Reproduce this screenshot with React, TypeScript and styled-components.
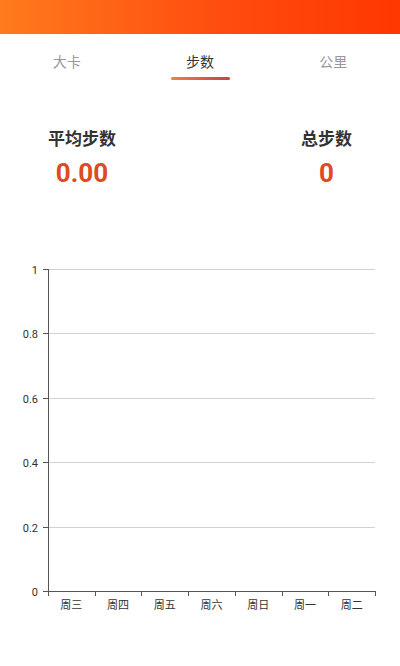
import styled, { createGlobalStyle } from "styled-components";

const GlobalStyle = createGlobalStyle`
  html, body {
    margin: 0;
    padding: 0;
    background: #fff;
    font-family: Roboto, "Noto Sans CJK SC", sans-serif;
  }
`;

const tabs = ["大卡", "步数", "公里"];
const days = ["周三", "周四", "周五", "周六", "周日", "周一", "周二"];
const yTicks = [0, 0.2, 0.4, 0.6, 0.8, 1];

// chart drawn in its own box; the box starts at page y=255
const Chart = () => {
  const left = 48;
  const right = 375;
  const top = 14;
  const bottom = 336;
  const h = bottom - top;
  const step = (right - left) / days.length;

  return (
    <ChartSvg width="400" height="370" viewBox="0 0 400 370">
      {yTicks.map((t) => {
        const y = Math.round(bottom - t * h) + 0.5;
        return (
          <g key={t}>
            {t > 0 && <line x1={left} x2={right} y1={y} y2={y} stroke="#d2d2d2" strokeWidth="1" />}
            <line x1={left - 5} x2={left} y1={y} y2={y} stroke="#555" strokeWidth="1" />
            <text x={left - 10} y={y + 4} textAnchor="end" fontSize="11" fill="#333">
              {t}
            </text>
          </g>
        );
      })}
      <line x1={left + 0.5} x2={left + 0.5} y1={top} y2={bottom + 1} stroke="#555" strokeWidth="1" />
      <line x1={left} x2={right + 1} y1={bottom + 0.5} y2={bottom + 0.5} stroke="#555" strokeWidth="1" />
      {Array.from({ length: days.length + 1 }).map((_, i) => {
        const x = Math.round(left + i * step) + 0.5;
        return <line key={i} x1={x} x2={x} y1={bottom} y2={bottom + 5} stroke="#555" strokeWidth="1" />;
      })}
      {days.map((d, i) => (
        <text
          key={d}
          x={left + i * step + step / 2}
          y={bottom + 18}
          textAnchor="middle"
          fontSize="11"
          fill="#333"
          fontFamily='"Noto Sans CJK SC", sans-serif'
        >
          {d}
        </text>
      ))}
    </ChartSvg>
  );
};

const App = () => {
  return (
    <Page>
      <GlobalStyle />
      <TopBar />
      <TabBar>
        {tabs.map((t) => (
          <Tab key={t} active={t === "步数"}>
            {t}
            {t === "步数" && <TabLine />}
          </Tab>
        ))}
      </TabBar>
      <Stats>
        <Stat>
          <StatLabel>平均步数</StatLabel>
          <StatValue>0.00</StatValue>
        </Stat>
        <Stat>
          <StatLabel>总步数</StatLabel>
          <StatValue>0</StatValue>
        </Stat>
      </Stats>
      <ChartBox>
        <Chart />
      </ChartBox>
    </Page>
  );
};

export default App;

const Page = styled.div`
  width: 400px;
  height: 666px;
  overflow: hidden;
  background: #fff;
`;

const TopBar = styled.div`
  height: 34px;
  background: linear-gradient(90deg, #ff7a1c 0%, #ff4d0f 55%, #ff3700 100%);
`;

const TabBar = styled.div`
  display: flex;
  height: 52px;
`;

const Tab = styled.div<{ active?: boolean }>`
  position: relative;
  flex: 1;
  display: flex;
  justify-content: center;
  padding-top: 16px;
  box-sizing: border-box;
  font-family: "Noto Sans CJK SC", sans-serif;
  font-size: 14px;
  line-height: 22px;
  color: ${(p) => (p.active ? "#333" : "#999")};
`;

const TabLine = styled.div`
  position: absolute;
  left: 50%;
  top: 43px;
  width: 59px;
  height: 3px;
  margin-left: -29px;
  border-radius: 2px;
  background: linear-gradient(90deg, #ea8248, #c8433a);
`;

const Stats = styled.div`
  display: flex;
  justify-content: space-between;
  height: 169px;
  box-sizing: border-box;
  padding: 40px 48px 0;
`;

const Stat = styled.div`
  display: flex;
  flex-direction: column;
  align-items: center;
`;

const StatLabel = styled.div`
  font-family: "Noto Sans CJK SC", sans-serif;
  font-size: 17px;
  font-weight: 700;
  line-height: 24px;
  color: #333;
`;

const StatValue = styled.div`
  margin-top: 8px;
  font-family: Roboto, sans-serif;
  font-size: 26px;
  font-weight: 700;
  line-height: 30px;
  color: #e04a22;
`;

const ChartBox = styled.div`
  width: 400px;
`;

const ChartSvg = styled.svg`
  display: block;
  font-family: Roboto, "Noto Sans CJK SC", sans-serif;
`;
